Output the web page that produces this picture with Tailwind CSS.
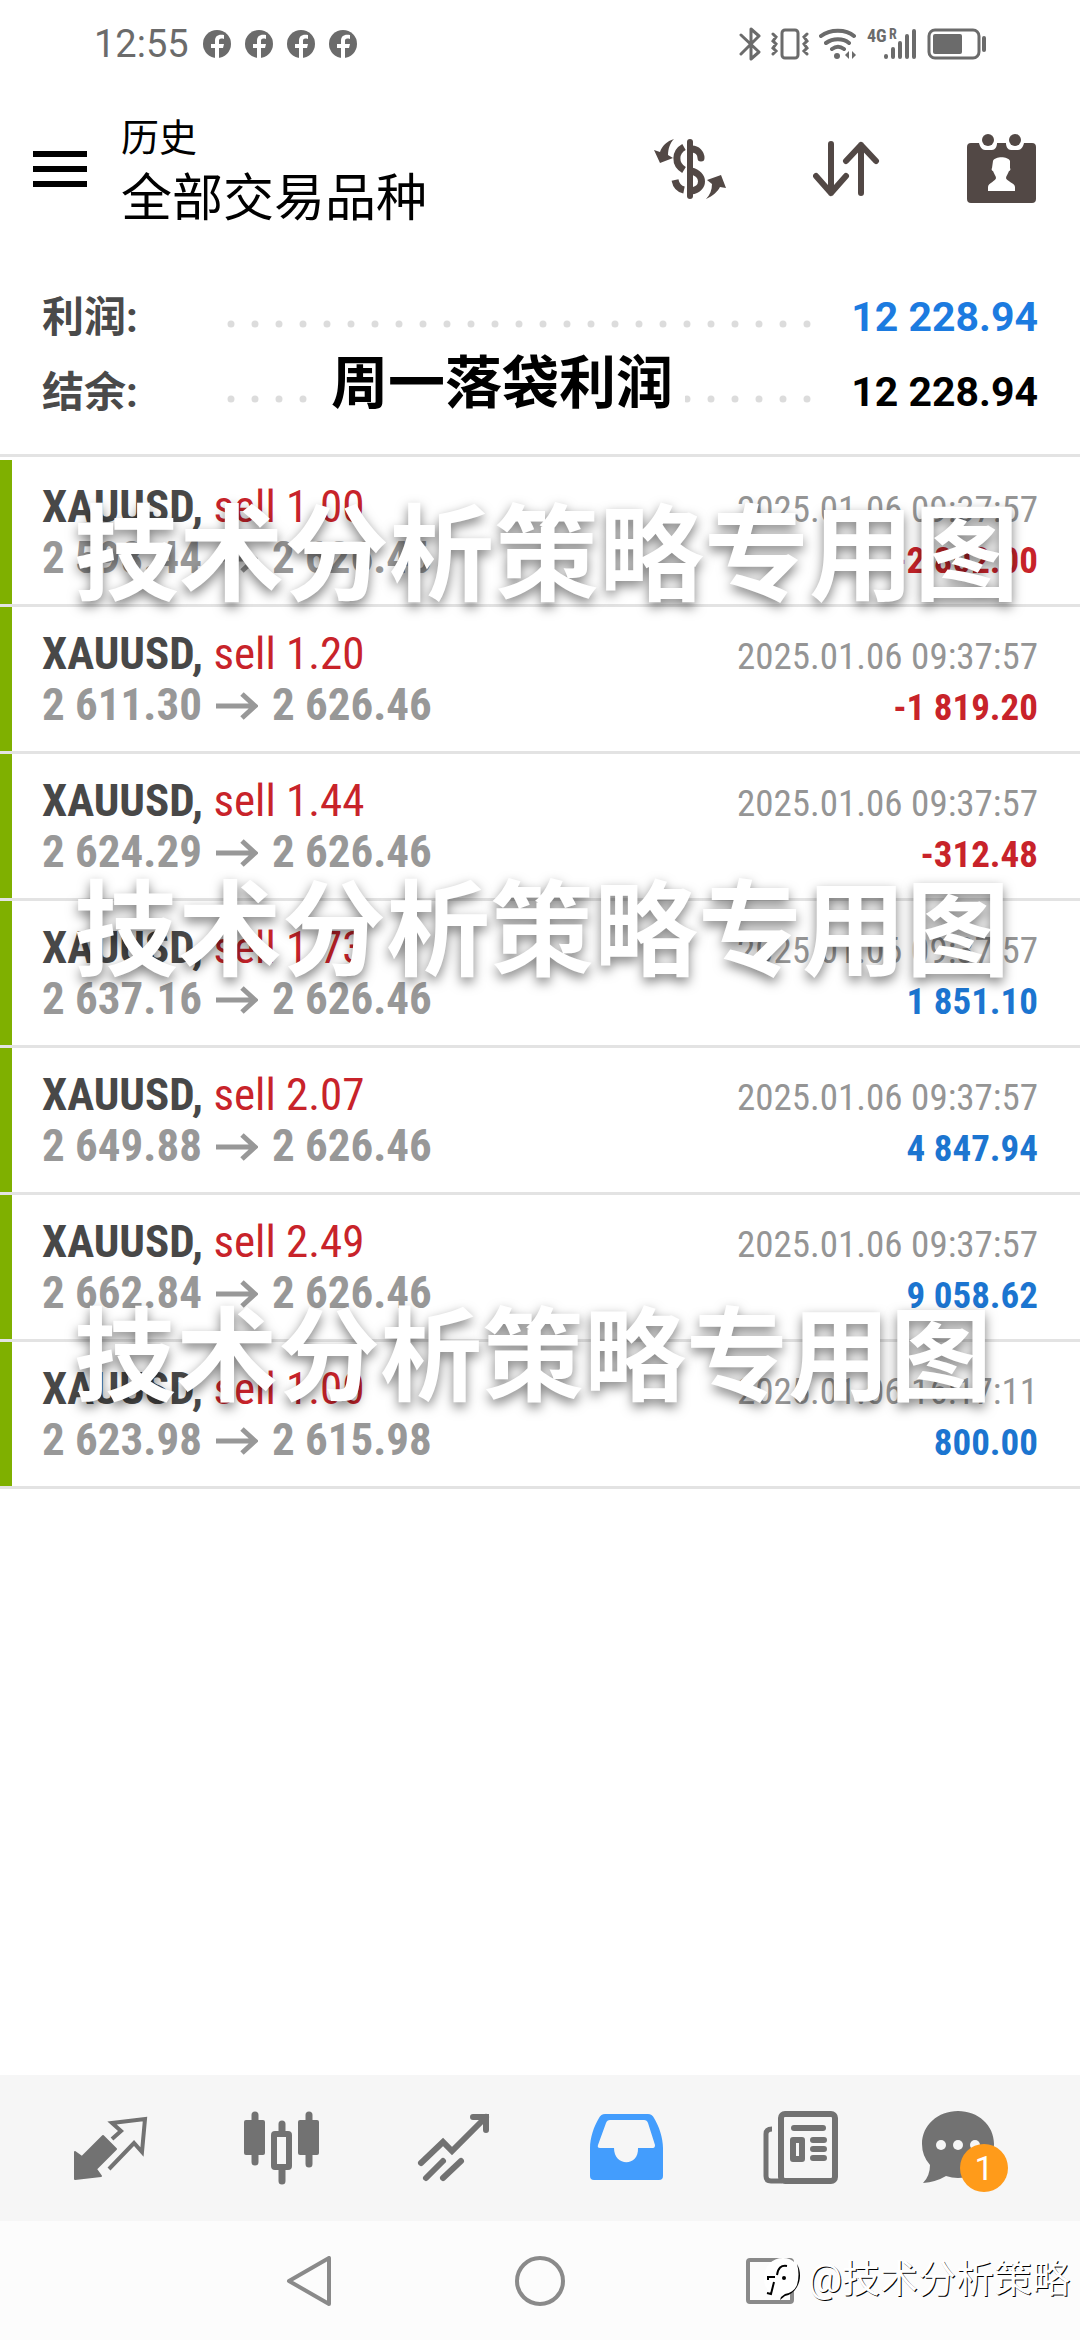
<!DOCTYPE html>
<html lang="zh-CN">

<head>
  <meta charset="UTF-8" />
  <meta name="viewport" content="width=device-width, initial-scale=1.0" />
  <title>历史 - 全部交易品种</title>
  <script src="https://cdn.jsdelivr.net/npm/@tailwindcss/browser@4"></script>
</head>

<body class="relative flex min-h-screen flex-col bg-white font-[Roboto,'Noto_Sans_CJK_SC',sans-serif] text-black">
  <!-- Phone status bar -->
  <div class="flex h-[88px] items-center justify-between pr-[93px] pl-[94px] text-[#6b6b6b]">
    <div class="flex items-center gap-[14px]">
      <span class="text-[38px] leading-[48px]">12:55</span>
      <div id="notifications" class="flex gap-[14px]"></div>
    </div>
    <div class="flex items-center gap-[10px]">
      <svg class="h-[34px] w-[22px]" viewBox="0 0 22 34" fill="none" stroke="currentColor" stroke-width="3" stroke-linejoin="round" stroke-linecap="round"><path d="M2 8l18 17-8 7V2l8 7L2 27" /></svg>
      <svg class="h-[32px] w-[38px]" viewBox="0 0 38 32" fill="none" stroke="currentColor" stroke-width="3" stroke-linecap="round"><rect x="11" y="2" width="16" height="28" rx="3" /><path d="M2 6l3 3-3 4 3 3-3 4 3 3-3 3M36 6l-3 3 3 4-3 3 3 4-3 3 3 3" stroke-width="3" /></svg>
      <svg class="h-[32px] w-[38px]" viewBox="0 0 38 32" fill="none" stroke="currentColor" stroke-width="4" stroke-linecap="round"><path d="M2 8c9-7 25-7 33 0M7 15c7-5 17-5 23 0M13 21c4-3 8-3 12 0" /><circle cx="18" cy="28" r="3" fill="currentColor" stroke="none" /><path d="M30 23v8l-4-4zM33 23v8l4-4z" fill="currentColor" stroke="none" /></svg>
      <div class="relative">
        <svg class="h-[32px] w-[50px]" viewBox="0 0 50 32" stroke="currentColor" stroke-width="4" stroke-linecap="round"><path d="M19 28v1M26 21v8M33 15v14M40 8v21M47 3v26" /></svg>
        <span class="absolute -top-[2px] left-0 font-['Roboto_Condensed',Roboto,sans-serif] text-[18px] leading-[20px] font-bold">4G</span>
        <span class="absolute -top-[2px] left-[22px] font-['Roboto_Condensed',Roboto,sans-serif] text-[14px] leading-[16px] font-bold">R</span>
      </div>
      <svg class="h-[32px] w-[60px]" viewBox="0 0 60 32" fill="none" stroke="currentColor"><rect x="2" y="2" width="50" height="28" rx="6" stroke-width="3" /><rect x="6" y="6" width="29" height="20" rx="2" fill="currentColor" stroke="none" /><path d="M57 10v12" stroke-width="4" stroke-linecap="round" /></svg>
    </div>
  </div>

  <header class="flex h-[162px] items-center justify-between pr-[44px] pl-[33px]">
    <div class="flex items-center gap-[34px]">
      <button aria-label="菜单">
        <svg class="h-[36px] w-[54px]" viewBox="0 0 54 36"><path d="M0 3h54M0 18h54M0 33h54" stroke="currentColor" stroke-width="6" /></svg>
      </button>
      <div class="pt-[8px]">
        <p class="text-[38px] leading-[52px]">历史</p>
        <h1 class="text-[51px] leading-[70px]">全部交易品种</h1>
      </div>
    </div>
    <div class="flex items-center gap-[87px] text-[#524845]">
      <button aria-label="货币">
        <svg class="h-[62px] w-[72px]" viewBox="0 0 72 62" fill="none" stroke="currentColor" stroke-width="6" stroke-linecap="round">
          <path d="M36 4v54" />
          <path d="M38 11c5 0 9 4 9 9M37 33c14 3 14 18 0 20" stroke-width="7" />
          <path d="M30 9c-9 5-10 17 0 23M21 42c1 5 4 9 9 10" stroke-linecap="butt" stroke-width="7" />
          <path d="M20 1C13 3 8 8 6 14L0 12l6 13 13-5-5-3C14 11 16 5 20 1zM52 61c7-3 12-8 14-12l6 1-5-13-14 5 5 4c0 6-2 11-6 15z" fill="currentColor" stroke="none" />
        </svg>
      </button>
      <button aria-label="排序">
        <svg class="h-[56px] w-[67px]" viewBox="0 0 67 56" fill="none" stroke="currentColor" stroke-width="6" stroke-linecap="round" stroke-linejoin="round"><path d="M18 3v49M3 35l15 17 15-17M48 52V4M33 20L48 4l15 16" /></svg>
      </button>
      <button aria-label="时间段">
        <svg class="h-[70px] w-[69px]" viewBox="0 0 69 70" fill="currentColor">
          <path d="M4 9h8c1 4 3 7 6 7h7c3 0 5-3 5-7h9c0 4 2 7 5 7h7c3 0 5-3 6-7h8q4 0 4 4v52q0 4-4 4H4q-4 0-4-4V13q0-4 4-4z" />
          <circle cx="21" cy="6" r="6" /><circle cx="48" cy="6" r="6" />
          <path d="M26 27c2-5 15-5 17 0v7c1 1 0 3-1 3-1 3-3 5-3 7 0 3 9 5 9 9v4H21v-4c0-4 8-6 8-9 0-2-2-4-3-7-1 0-2-2-1-3z" fill="#fff" />
        </svg>
      </button>
    </div>
  </header>

  <!-- Totals -->
  <section class="relative border-b-3 border-[#e3e3e3] px-[42px] pt-[30px] pb-[24px] font-bold">
    <dl>
      <div class="flex h-[75px] items-center">
        <dt class="w-[184px] text-[42px] text-[#4a4a4a]">利润:</dt>
        <dd class="flex flex-1 items-center justify-between text-[41px] text-[#1c7be0]">
          <svg class="mt-[12px] h-[8px] w-[586px]" viewBox="0 0 586 8"><path d="M5 4H583" stroke="#dcdcdc" stroke-width="7" stroke-linecap="round" stroke-dasharray="0 24" /></svg>
          12 228.94
        </dd>
      </div>
      <div class="flex h-[75px] items-center">
        <dt class="w-[184px] text-[42px] text-[#4a4a4a]">结余:</dt>
        <dd class="flex flex-1 items-center justify-between text-[41px]">
          <svg class="mt-[12px] h-[8px] w-[586px]" viewBox="0 0 586 8"><path d="M5 4H583" stroke="#dcdcdc" stroke-width="7" stroke-linecap="round" stroke-dasharray="0 24" /></svg>
          12 228.94
        </dd>
      </div>
    </dl>
    <p class="absolute top-[99px] left-[311px] bg-white pr-[12px] pl-[20px] text-[57px] leading-[70px]">周一落袋利润</p>
  </section>

  <main class="grow pt-[3px]">
    <ul id="deals"></ul>
  </main>

  <!-- Tab bar -->
  <nav class="flex h-[146px] items-center gap-24 bg-[#f6f6f6] pl-[72px] text-[#727272]">
    <a href="#quotes" aria-label="行情">
      <svg class="h-[76px] w-[76px]" viewBox="0 0 76 76">
        <path d="M3 42l7 5 21-21 13 13-20 20 5 7-26 3z" fill="currentColor" stroke="currentColor" stroke-width="2" stroke-linejoin="round" />
        <path d="M40 29l9-8-9-8 33-4-3 33-8-9-25 26" fill="none" stroke="currentColor" stroke-width="4" />
      </svg>
    </a>
    <a href="#chart" aria-label="图表">
      <svg class="h-[76px] w-[76px]" viewBox="0 0 76 76">
        <path d="M11 5v47M38 14v57M65 5v49" stroke="currentColor" stroke-width="7" stroke-linecap="round" />
        <rect y="10" width="21" height="35" rx="2" fill="currentColor" /><rect x="54" y="10" width="21" height="35" rx="2" fill="currentColor" />
        <rect x="30" y="24" width="15" height="33" rx="1" fill="#f6f6f6" stroke="currentColor" stroke-width="6" />
      </svg>
    </a>
    <a href="#trade" aria-label="交易">
      <svg class="h-[76px] w-[76px]" viewBox="0 0 76 76" fill="none" stroke="currentColor" stroke-width="6" stroke-linecap="round"><path d="M5 53l22-21 9 9L70 7M57 7h13v13M10 68l17-17M27 68l18-17" /></svg>
    </a>
    <a href="#history" aria-label="历史" class="text-[#439dfd]">
      <svg class="h-[76px] w-[76px]" viewBox="0 0 76 76">
        <path d="M17 4h43q4 0 6 4c5 8 9 20 9 30v28q0 4-4 4H6q-4 0-4-4V38C2 28 6 16 11 8q2-4 6-4z" fill="currentColor" />
        <path d="M22 10h34q3 0 4 3l7 22q0 3-2 3H50c1 19-24 19-24 0H12q-3 0-2-3l8-22q1-3 4-3z" fill="#f6f6f6" />
      </svg>
    </a>
    <a href="#news" aria-label="新闻">
      <svg class="h-[76px] w-[78px]" viewBox="0 0 78 76" fill="none" stroke="currentColor" stroke-width="6">
        <rect x="21" y="4" width="54" height="67" rx="4" />
        <path d="M22 71H11q-5 0-5-5V24q0-5 6-5" stroke-width="5" />
        <path d="M34 18h29" stroke-linecap="round" stroke-width="6" />
        <path d="M53 30h11M53 39h11M53 48h11" stroke-linecap="round" stroke-width="6" />
        <rect x="33" y="30" width="9" height="19" stroke-width="6" stroke-linejoin="round" />
      </svg>
    </a>
    <a href="#messages" aria-label="消息" class="relative -ml-[14px]">
      <svg class="h-[76px] w-[76px]" viewBox="0 0 76 76">
        <path d="M38 1c20 0 36 14 36 33S58 68 38 68q-6 0-12-2-10 6-23 7 7-7 7-18-8-9-8-21C2 15 18 1 38 1z" fill="currentColor" />
        <g fill="#f6f6f6"><circle cx="21" cy="35" r="5" /><circle cx="38" cy="35" r="5" /><circle cx="55" cy="35" r="5" /></g>
      </svg>
      <span class="absolute top-[34px] left-[40px] size-12 rounded-full bg-[#ff9b1a] text-center text-[34px] leading-12 text-white">1</span>
    </a>
  </nav>

  <!-- System navigation -->
  <div class="relative flex h-[119px] items-center justify-center gap-[180px] bg-[#fcfcfc] text-[#8a8a8a]">
    <button aria-label="返回">
      <svg class="size-[50px]" viewBox="0 0 50 50" fill="none" stroke="currentColor" stroke-width="4" stroke-linejoin="round"><path d="M44 2v46L4 25z" /></svg>
    </button>
    <button aria-label="主屏幕">
      <svg class="size-[50px]" viewBox="0 0 50 50" fill="none" stroke="currentColor" stroke-width="4"><circle cx="25" cy="25" r="23" /></svg>
    </button>
    <button aria-label="最近任务">
      <svg class="size-[50px]" viewBox="0 0 50 50" fill="none" stroke="currentColor" stroke-width="4"><rect x="3" y="4" width="44" height="42" rx="2" /></svg>
    </button>
    <div class="absolute right-[10px] bottom-[36px] flex items-center gap-[6px]">
      <svg class="h-[44px] w-[38px]" viewBox="0 0 38 44">
        <path d="M19 1c11 0 17 8 16 19-1 12-7 17-14 18l-5 4 1-4C5 38 0 31 0 21 0 9 8 1 19 1z" fill="#fff" />
        <path d="M33 7c4 7 4 16 0 23-3 5-7 8-12 9l-5 4 1-3 4-3c6-1 10-4 12-9 2-7 2-14 0-21z" />
        <path d="M23 9c-6-1-9 2-10 9M4 23v-3h7M10 25L7 37l-4-1" fill="none" stroke="#000" stroke-width="2" />
        <circle cx="20" cy="21" r="2" />
      </svg>
      <span class="text-[38px] leading-[50px] text-white [text-shadow:1px_1px_0_#000]">@技术分析策略</span>
    </div>
  </div>

  <!-- Watermarks over the list -->
  <div class="pointer-events-none absolute inset-x-0 top-[479px] flex flex-col pl-[74px] font-bold whitespace-nowrap text-white [text-shadow:0_5px_12px_rgb(0_0_0/50%)]">
    <p class="h-[376px] text-[105px] leading-[156px]">技术分析策略专用图</p>
    <p class="h-[425px] text-[104px] leading-[156px]">技术分析策略专用图</p>
    <p class="text-[102px] leading-[156px]">技术分析策略专用图</p>
  </div>

  <script>
    const deals = [
      { lots: '1.00', open: '2 598.44', close: '2 626.46', time: '2025.01.06 09:37:57', profit: '-2 802.00' },
      { lots: '1.20', open: '2 611.30', close: '2 626.46', time: '2025.01.06 09:37:57', profit: '-1 819.20' },
      { lots: '1.44', open: '2 624.29', close: '2 626.46', time: '2025.01.06 09:37:57', profit: '-312.48' },
      { lots: '1.73', open: '2 637.16', close: '2 626.46', time: '2025.01.06 09:37:57', profit: '1 851.10' },
      { lots: '2.07', open: '2 649.88', close: '2 626.46', time: '2025.01.06 09:37:57', profit: '4 847.94' },
      { lots: '2.49', open: '2 662.84', close: '2 626.46', time: '2025.01.06 09:37:57', profit: '9 058.62' },
      { lots: '1.00', open: '2 623.98', close: '2 615.98', time: '2025.01.06 16:17:11', profit: '800.00' }
    ];

    document.getElementById('deals').innerHTML = deals.map(d => `
      <li class="flex border-b-3 border-[#e3e3e3] font-['Roboto_Condensed','Liberation_Sans_Narrow',Roboto,sans-serif]">
        <div class="w-[12px] bg-[#7fb000]"></div>
        <div class="h-[144px] grow pt-[21px] pr-[42px] pl-[30px]">
          <div class="flex h-[51px] items-baseline justify-between">
            <p class="text-[45px] leading-[51px] text-[#c8232a]"><b class="text-[#484848]">XAUUSD,</b> sell ${d.lots}</p>
            <time class="text-[37px] leading-[51px] text-[#959595]">${d.time}</time>
          </div>
          <div class="flex h-[51px] items-baseline justify-between font-bold">
            <p class="flex items-baseline gap-[14px] text-[45px] leading-[51px] text-[#989898]">
              ${d.open}
              <svg class="h-[28px] w-[42px]" viewBox="0 0 42 28" fill="none" stroke="currentColor" stroke-width="5"><path d="M0 14h38M26 2l13 12-13 12" /></svg>
              ${d.close}
            </p>
            <p class="text-[37px] leading-[51px] ${d.profit.startsWith('-') ? 'text-[#c8232a]' : 'text-[#1c75d0]'}">${d.profit}</p>
          </div>
        </div>
      </li>
    `).join('');

    document.getElementById('notifications').innerHTML = Array(4).fill(`
      <svg class="size-[28px]" viewBox="0 0 28 28"><circle cx="14" cy="14" r="14" fill="currentColor" /><path d="M12 28V18H8v-4h4v-3c0-5 3-7 9-6v4c-4-1-5 0-5 2v3h5l-1 4h-4v10z" fill="#fff" /></svg>
    `).join('');
  </script>
</body>

</html>
